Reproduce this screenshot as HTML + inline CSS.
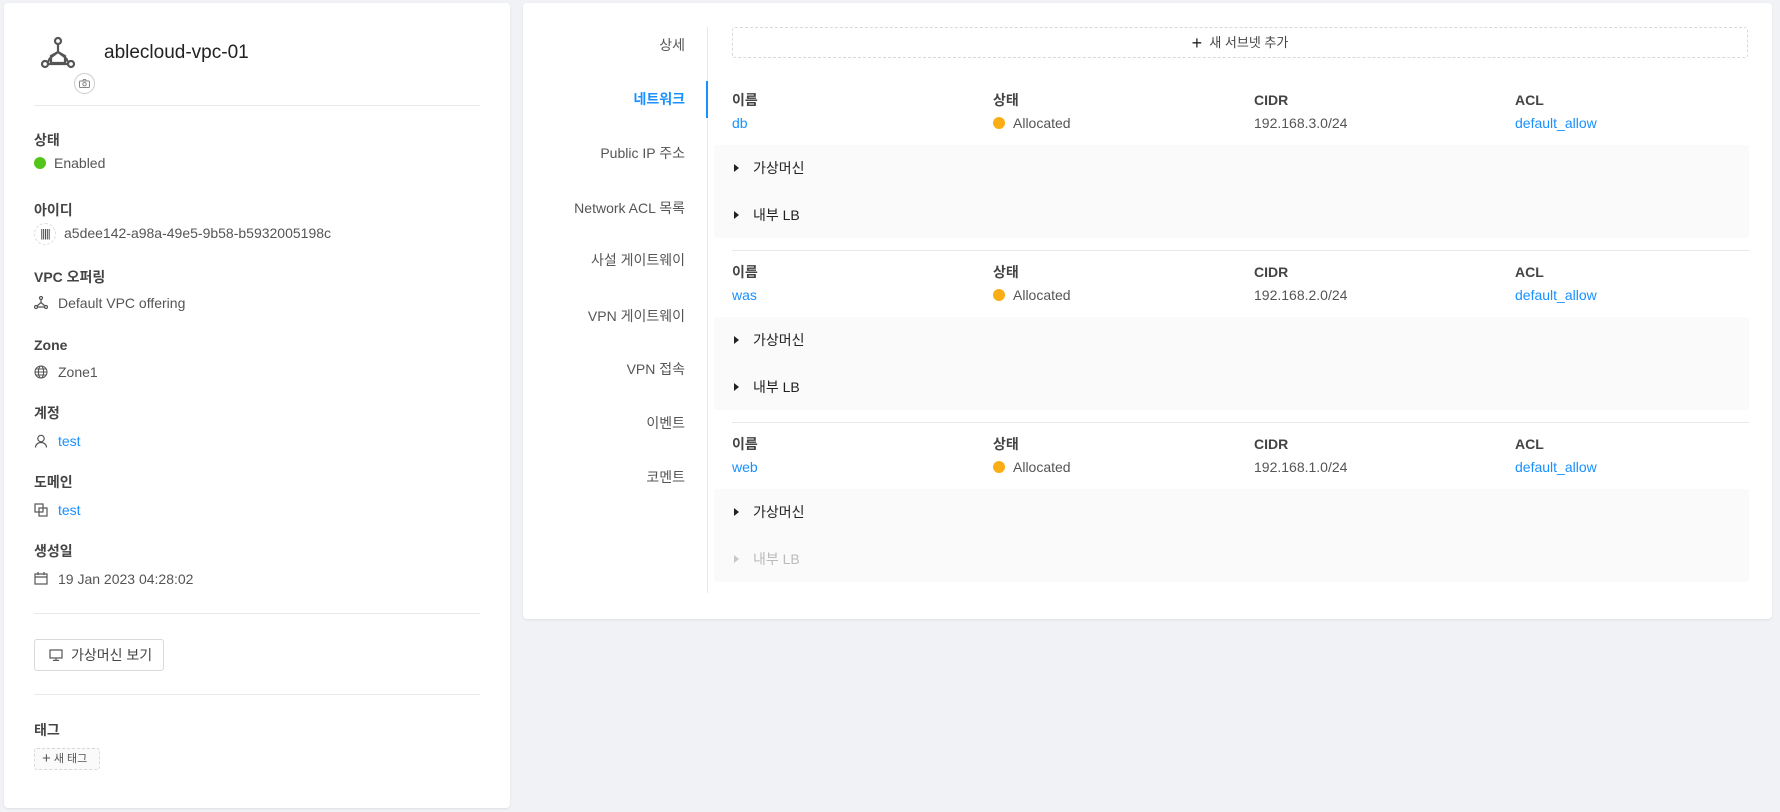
<!DOCTYPE html>
<html><head><meta charset="utf-8"><style>
*{box-sizing:border-box;margin:0;padding:0}
body{width:1780px;height:812px;background:#f0f2f5;font-family:"Liberation Sans","Noto Sans CJK KR",sans-serif;font-size:14px;color:#333;position:relative;overflow:hidden}
.card{position:absolute;background:#fff;border-radius:4px;box-shadow:0 1px 2px rgba(0,0,0,.08)}
.a{position:absolute;white-space:nowrap;line-height:20px}
.lbl{font-weight:bold;color:#444}
.val{color:#555}
.blue{color:#1890ff}
.hr{position:absolute;height:1px;background:#e8e8e8}
.nav{position:absolute;left:0;width:162px;text-align:right;color:#555;font-size:14px;line-height:20px}
.dot{display:inline-block;width:12px;height:12px;border-radius:50%;vertical-align:-1px;margin-right:8px}
.tri{position:absolute;width:0;height:0;border-left:5px solid #222;border-top:4px solid transparent;border-bottom:4px solid transparent}
</style></head><body>

<div class="card" style="left:4px;top:3px;width:506px;height:805px">
  <svg style="position:absolute;left:36px;top:33px" width="36" height="34" viewBox="0 0 36 34" fill="none" stroke="#555" stroke-width="2.2">
    <circle cx="18" cy="5" r="3"/><circle cx="5" cy="28" r="3"/><circle cx="31" cy="28" r="3"/>
    <path d="M18 8v8M18 16l-8 6M18 16l8 6M10 22l-2 4M26 22l2 4M8 28h20" />
    <path d="M11 20l7-4 7 4v7l-7 0-7 0z"/>
  </svg>
  <div style="position:absolute;left:70px;top:70px;width:21px;height:21px;border:1px solid #ccc;border-radius:50%"></div>
  <svg style="position:absolute;left:75px;top:76px" width="11" height="9" viewBox="0 0 11 9" fill="none" stroke="#888" stroke-width="1"><rect x="0.5" y="2" width="10" height="6.5" rx="1"/><circle cx="5.5" cy="5.2" r="1.7"/><path d="M3.5 2l1-1.5h2l1 1.5"/></svg>
  <div class="a" style="left:100px;top:37px;font-size:19px;line-height:26px;color:#222">ablecloud-vpc-01</div>
  <div class="hr" style="left:30px;top:102px;width:446px"></div>

  <div class="a lbl" style="left:30px;top:127px">상태</div>
  <div class="a val" style="left:30px;top:150px"><span class="dot" style="background:#52c41a"></span>Enabled</div>
  <div class="a lbl" style="left:30px;top:197px">아이디</div>
  <div class="a val" style="left:30px;top:220px"><span style="display:inline-block;width:22px;height:22px;border:1px dashed #ddd;border-radius:50%;vertical-align:middle;margin-right:8px;text-align:center;font-size:11px;line-height:20px;color:#333;letter-spacing:-1px">|||||</span>a5dee142-a98a-49e5-9b58-b5932005198c</div>
  <div class="a lbl" style="left:30px;top:264px">VPC 오퍼링</div>
  <div class="a val" style="left:30px;top:290px"><svg width="14" height="13" viewBox="0 0 14 13" fill="none" stroke="#555" stroke-width="1.2" style="vertical-align:-1px;margin-right:10px"><circle cx="7" cy="2" r="1.5"/><circle cx="2" cy="11" r="1.5"/><circle cx="12" cy="11" r="1.5"/><path d="M7 3.5v3M7 6.5l-4 3.5M7 6.5l4 3.5M3.5 11h7"/></svg>Default VPC offering</div>
  <div class="a lbl" style="left:30px;top:332px">Zone</div>
  <div class="a val" style="left:30px;top:359px"><svg width="14" height="14" viewBox="0 0 14 14" fill="none" stroke="#555" stroke-width="1.1" style="vertical-align:-2px;margin-right:10px"><circle cx="7" cy="7" r="6"/><ellipse cx="7" cy="7" rx="2.6" ry="6"/><path d="M1 7h12M2 4h10M2 10h10"/></svg>Zone1</div>
  <div class="a lbl" style="left:30px;top:400px">계정</div>
  <div class="a blue" style="left:30px;top:428px"><svg width="14" height="14" viewBox="0 0 14 14" fill="none" stroke="#555" stroke-width="1.2" style="vertical-align:-2px;margin-right:10px"><circle cx="7" cy="4.5" r="3.2"/><path d="M1.5 13.5c0-3 2.5-5 5.5-5s5.5 2 5.5 5"/></svg>test</div>
  <div class="a lbl" style="left:30px;top:469px">도메인</div>
  <div class="a blue" style="left:30px;top:497px"><svg width="14" height="14" viewBox="0 0 14 14" fill="none" stroke="#555" stroke-width="1.2" style="vertical-align:-2px;margin-right:10px"><rect x="1" y="1" width="8" height="8"/><rect x="5" y="5" width="8" height="8"/></svg>test</div>
  <div class="a lbl" style="left:30px;top:538px">생성일</div>
  <div class="a val" style="left:30px;top:566px"><svg width="14" height="13" viewBox="0 0 14 13" fill="none" stroke="#555" stroke-width="1.2" style="vertical-align:-1px;margin-right:10px"><rect x="1" y="2" width="12" height="10"/><path d="M1 5h12M4 0v3M10 0v3"/></svg>19 Jan 2023 04:28:02</div>
  <div class="hr" style="left:30px;top:610px;width:446px"></div>
  <div style="position:absolute;left:30px;top:636px;width:130px;height:32px;border:1px solid #d9d9d9;border-radius:3px;font-size:14px;line-height:30px;color:#444;padding-left:14px"><svg width="14" height="12" viewBox="0 0 14 12" fill="none" stroke="#555" stroke-width="1.2" style="vertical-align:-1px;margin-right:8px"><rect x="1" y="1" width="12" height="8"/><path d="M4 11.5h6M7 9v2.5"/></svg>가상머신 보기</div>
  <div class="hr" style="left:30px;top:691px;width:446px"></div>
  <div class="a lbl" style="left:30px;top:717px">태그</div>
  <div style="position:absolute;left:30px;top:745px;width:66px;height:22px;border:1px dashed #d9d9d9;border-radius:3px;background:#fafafa;font-size:11px;line-height:20px;color:#555;padding-left:7px"><span style="font-size:15px;vertical-align:-1px">+</span> 새 태그</div>
</div>

<div class="card" style="left:523px;top:3px;width:1249px;height:616px">
  <div class="nav" style="top:32px">상세</div>
  <div class="nav" style="top:86px;color:#1890ff;font-weight:bold">네트워크</div>
  <div class="nav" style="top:140px">Public IP 주소</div>
  <div class="nav" style="top:195px">Network ACL 목록</div>
  <div class="nav" style="top:247px">사설 게이트웨이</div>
  <div class="nav" style="top:303px">VPN 게이트웨이</div>
  <div class="nav" style="top:356px">VPN 접속</div>
  <div class="nav" style="top:410px">이벤트</div>
  <div class="nav" style="top:464px">코멘트</div>
  <div style="position:absolute;left:184px;top:24px;width:1px;height:566px;background:#e8e8e8"></div>
  <div style="position:absolute;left:183px;top:78px;width:2px;height:37px;background:#1890ff"></div>
  <div style="position:absolute;left:209px;top:24px;width:1016px;height:31px;border:1px dashed #d9d9d9;border-radius:3px;text-align:center;line-height:29px;color:#444;font-size:13px"><span style="font-size:18px;vertical-align:-2px;color:#222">+</span>&nbsp; 새 서브넷 추가</div>
</div>

<div style="position:absolute;left:0;top:0">
  <div class="a lbl" style="left:732px;top:90px">이름</div>
  <div class="a lbl" style="left:993px;top:90px">상태</div>
  <div class="a lbl" style="left:1254px;top:90px">CIDR</div>
  <div class="a lbl" style="left:1515px;top:90px">ACL</div>
  <div class="a blue" style="left:732px;top:113px">db</div>
  <div class="a val" style="left:993px;top:113px"><span class="dot" style="background:#faad14"></span>Allocated</div>
  <div class="a val" style="left:1254px;top:113px">192.168.3.0/24</div>
  <div class="a blue" style="left:1515px;top:113px">default_allow</div>
  <div style="position:absolute;left:714px;top:145px;width:1035px;height:93px;background:#fafafa;border-radius:3px"></div>
  <div class="tri" style="left:734px;top:164px"></div><div class="a" style="left:753px;top:158px;color:#222">가상머신</div>
  <div class="tri" style="left:734px;top:211px"></div><div class="a" style="left:753px;top:205px;color:#222">내부 LB</div>
  <div class="hr" style="left:732px;top:250px;width:1017px"></div>

  <div class="a lbl" style="left:732px;top:262px">이름</div>
  <div class="a lbl" style="left:993px;top:262px">상태</div>
  <div class="a lbl" style="left:1254px;top:262px">CIDR</div>
  <div class="a lbl" style="left:1515px;top:262px">ACL</div>
  <div class="a blue" style="left:732px;top:285px">was</div>
  <div class="a val" style="left:993px;top:285px"><span class="dot" style="background:#faad14"></span>Allocated</div>
  <div class="a val" style="left:1254px;top:285px">192.168.2.0/24</div>
  <div class="a blue" style="left:1515px;top:285px">default_allow</div>
  <div style="position:absolute;left:714px;top:317px;width:1035px;height:93px;background:#fafafa;border-radius:3px"></div>
  <div class="tri" style="left:734px;top:336px"></div><div class="a" style="left:753px;top:330px;color:#222">가상머신</div>
  <div class="tri" style="left:734px;top:383px"></div><div class="a" style="left:753px;top:377px;color:#222">내부 LB</div>
  <div class="hr" style="left:732px;top:422px;width:1017px"></div>

  <div class="a lbl" style="left:732px;top:434px">이름</div>
  <div class="a lbl" style="left:993px;top:434px">상태</div>
  <div class="a lbl" style="left:1254px;top:434px">CIDR</div>
  <div class="a lbl" style="left:1515px;top:434px">ACL</div>
  <div class="a blue" style="left:732px;top:457px">web</div>
  <div class="a val" style="left:993px;top:457px"><span class="dot" style="background:#faad14"></span>Allocated</div>
  <div class="a val" style="left:1254px;top:457px">192.168.1.0/24</div>
  <div class="a blue" style="left:1515px;top:457px">default_allow</div>
  <div style="position:absolute;left:714px;top:489px;width:1035px;height:93px;background:#fafafa;border-radius:3px"></div>
  <div class="tri" style="left:734px;top:508px"></div><div class="a" style="left:753px;top:502px;color:#222">가상머신</div>
  <div class="tri" style="left:734px;top:555px;border-left-color:#c8c8c8"></div><div class="a" style="left:753px;top:549px;color:#bbb">내부 LB</div>
</div>
</body></html>
